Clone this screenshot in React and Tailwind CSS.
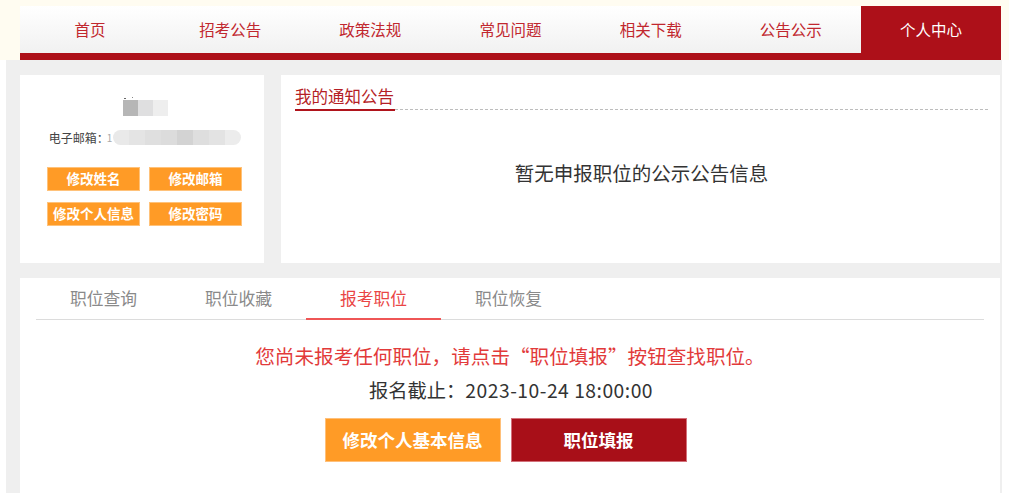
import React, { useState } from 'react'

const NAV = ['首页', '招考公告', '政策法规', '常见问题', '相关下载', '公告公示', '个人中心']
const TABS = ['职位查询', '职位收藏', '报考职位', '职位恢复']

// 模糊处理的个人信息（截图中已打码）
const Blur = ({ cells, className }) => (
  <div className={`flex overflow-hidden ${className}`}>
    {cells.map((c, i) => (
      <div key={i} className="h-full flex-1" style={{ background: c }} />
    ))}
  </div>
)

const SmallBtn = ({ children }) => (
  <button className="h-[24px] w-[93px] bg-[#ff9b26] border border-[#ffc27a] text-white text-[13.5px] font-bold leading-none flex items-center justify-center">
    {children}
  </button>
)

const App = () => {
  const [activeNav] = useState(6)
  const [activeTab, setActiveTab] = useState(2)

  return (
    <div className="w-[1009px] h-[493px] overflow-hidden bg-white font-['Noto_Sans_CJK_SC','Microsoft_YaHei',sans-serif]">
      {/* 顶部导航 */}
      <div className="bg-[#fffcf1] pt-[6px] pl-[20px]">
        <div className="w-[981px]">
          <div className="h-[47px] flex bg-gradient-to-b from-white to-[#f1f1f1]">
            {NAV.map((n, i) => (
              <div
                key={n}
                className={`flex-1 flex items-center justify-center text-[15.5px] leading-none ${
                  i === activeNav ? 'bg-[#ad1019] text-white' : 'text-[#c1272e]'
                }`}
              >
                {n}
              </div>
            ))}
          </div>
          <div className="h-[7px] bg-[#ad1019]" />
        </div>
      </div>

      {/* 主体 */}
      <div className="ml-[6px] w-[996px] h-[433px] bg-[#efefef] pl-[14px] pr-[2px] pt-[15px] flex flex-col gap-[15px]">
        <div className="h-[188px] flex gap-[17px] shrink-0">
          {/* 个人信息 */}
          <div className="w-[244px] bg-white flex flex-col items-center pt-[25px] pl-[5px]">
            <div className="relative ml-[1px]">
              <Blur className="w-[45px] h-[16px]" cells={['#b6b6b6', '#dfdfe0', '#eeeeee']} />
              <span className="absolute -top-[2px] left-[1px] w-[2px] h-[1px] bg-[#666]" />
              <span className="absolute -top-[3px] left-[9px] w-[1px] h-[1px] bg-[#888]" />
            </div>
            <div className="mt-[14px] flex items-center text-[12px] leading-none text-[#444] ml-[1px]">
              <span>电子邮箱：</span>
              <span className="text-[10px] text-[#aaa] -ml-[2px] mr-[1px]">1</span>
              <Blur
                className="w-[128px] h-[15px] rounded-full"
                cells={['#e9e9e9', '#e4e4e4', '#dfdfdf', '#dcdcdc', '#d3d3d3', '#dedede', '#e3e3e3', '#ececec']}
              />
            </div>
            <div className="mt-[22px] grid grid-cols-2 gap-x-[9px] gap-y-[11px]">
              <SmallBtn>修改姓名</SmallBtn>
              <SmallBtn>修改邮箱</SmallBtn>
              <SmallBtn>修改个人信息</SmallBtn>
              <SmallBtn>修改密码</SmallBtn>
            </div>
          </div>

          {/* 通知公告 */}
          <div className="flex-1 bg-white pl-[14px] pr-[12px] pt-[9px]">
            <div className="flex items-end">
              <div className="h-[27px] border-b-2 border-[#b0141c] text-[16.5px] leading-[24px] text-[#b51e25] pr-[1px]">
                我的通知公告
              </div>
              <div className="flex-1 border-b border-dashed border-[#bdbdbd] mb-[1px]" />
            </div>
            <p className="mt-[48px] text-center text-[19.5px] leading-[28px] text-[#333]">
              暂无申报职位的公示公告信息
            </p>
          </div>
        </div>

        {/* 报考职位 */}
        <div className="flex-1 bg-white px-[16px]">
          <div className="h-[42px] flex border-b border-[#dcdcdc]">
            {TABS.map((t, i) => (
              <button
                key={t}
                onClick={() => setActiveTab(i)}
                className={`w-[135px] flex items-center justify-center text-[16.8px] leading-none ${
                  i === activeTab
                    ? 'text-[#ea4545] border-b-2 border-[#ef5656] -mb-px'
                    : 'text-[#8a8a8a]'
                }`}
              >
                {t}
              </button>
            ))}
          </div>
          <div className="flex flex-col items-center">
            <p className="mt-[22px] text-[19.6px] leading-[28px] text-[#e23a3a]">
              您尚未报考任何职位，请点击“职位填报”按钮查找职位。
            </p>
            <p className="mt-[6px] text-[19.3px] leading-[28px] text-[#333] pl-[2px]">
              报名截止：<span className="tracking-[0.5px]">2023-10-24 18:00:00</span>
            </p>
            <div className="mt-[14px] flex gap-[10px] mr-[9px]">
              <button className="w-[176px] h-[44px] bg-[#ff9b26] border border-[#ffc07a] text-white text-[17.5px] font-bold">
                修改个人基本信息
              </button>
              <button className="w-[176px] h-[44px] bg-[#a80f18] border border-[#d3707a] text-white text-[17.5px] font-bold">
                职位填报
              </button>
            </div>
          </div>
        </div>
      </div>
    </div>
  )
}

export default App
